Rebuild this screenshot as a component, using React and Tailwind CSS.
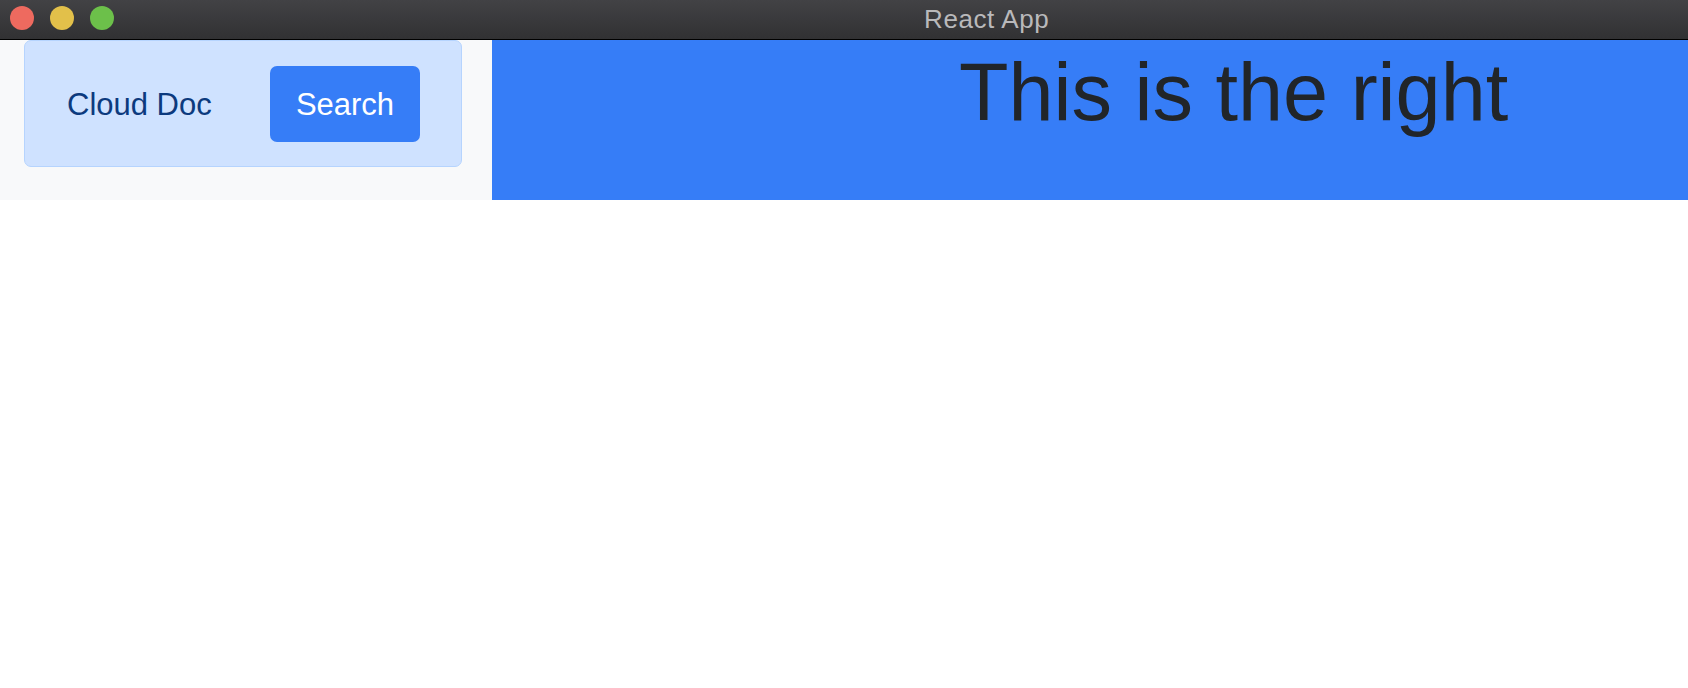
export default function App() {
  return (
    <div className="w-[1688px] h-[688px] bg-white font-['Liberation_Sans',Arial,sans-serif]">
      <div className="h-[40px] flex items-start bg-gradient-to-b from-[#424245] to-[#313133] border-b border-black">
        <div className="flex gap-[16px] pl-[10px] pt-[6px]">
          <span className="w-[24px] h-[24px] rounded-full bg-[#ee6a5f]" />
          <span className="w-[24px] h-[24px] rounded-full bg-[#e2c04a]" />
          <span className="w-[24px] h-[24px] rounded-full bg-[#6cc04a]" />
        </div>
        <span className="ml-[810px] pt-[5px] text-[26px] leading-[29px] tracking-[0.6px] text-[#b9b9bb]">React App</span>
      </div>

      <div className="flex h-[160px]">
        <div className="w-[492px] bg-[#f8f9fa] pl-[24px] pr-[30px]">
          <div className="h-[127px] flex items-center justify-between pl-[42px] pr-[41px] bg-[#cfe2ff] border border-[#b6d4fe] rounded-[7px]">
            <span className="pt-[4px] text-[31px] text-[#0c3a7e]">Cloud Doc</span>
            <button className="w-[150px] h-[76px] pt-[4px] rounded-[7px] bg-[#367df7] text-white text-[31px]">
              Search
            </button>
          </div>
        </div>
        <div className="flex-1 bg-[#367df7] pl-[467px] pt-[4px]">
          <h1 className="text-[81px] leading-[1.2] text-[#212529]">This is the right</h1>
        </div>
      </div>
    </div>
  );
}
